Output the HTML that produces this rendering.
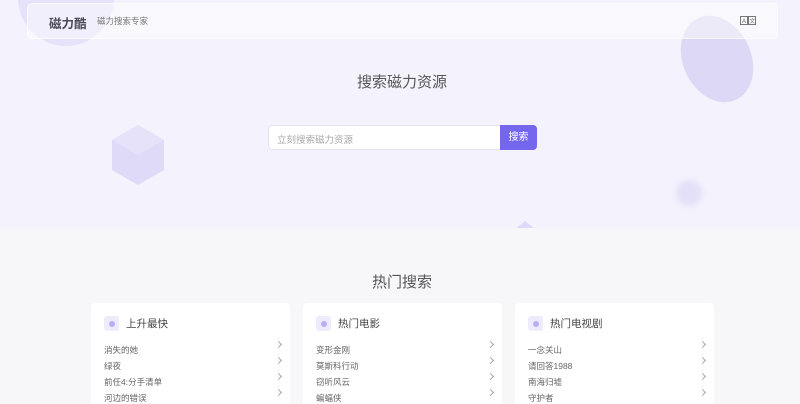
<!DOCTYPE html>
<html><head><meta charset="utf-8"><style>
*{margin:0;padding:0;box-sizing:border-box}
html,body{width:800px;height:404px;overflow:hidden}
body{background:#f7f7fa;font-family:"Liberation Sans","Noto Sans CJK SC",sans-serif;position:relative}
.hero{position:absolute;left:0;top:0;width:800px;height:228px;background:#f4f2fc;overflow:hidden}
.abs{position:absolute}
.hdr{left:27px;top:3px;width:751px;height:36px;border-radius:5px;background:rgba(255,255,255,.45);border:1px solid rgba(255,255,255,.6)}
.logo{left:49px;top:13px;font-size:12.5px;font-weight:bold;color:#4a4a55}
.sub{left:97px;top:15px;font-size:8.5px;color:#777}
.h1{left:0;width:804px;text-align:center;font-size:15px;color:#555}
.inp{left:268px;top:125px;width:233px;height:25px;background:#fff;border:1px solid #e4e2ee;border-radius:4px 0 0 4px;font-size:9.5px;color:#aaa;padding:6px 8px}
.btn{left:500px;top:125px;width:37px;height:25px;background:#7566ee;border-radius:0 4px 4px 0;color:#fff;font-size:10px;text-align:center;line-height:25px}
.card{top:303px;width:199px;height:110px;background:#fff;border-radius:4px}
.ic{position:absolute;left:13px;top:13px;width:15px;height:15px;background:#eeebfc;border-radius:3px}
.ic:after{content:"";position:absolute;left:4.5px;top:4.5px;width:6px;height:6px;border-radius:50%;background:#b7aef5}
.ct{position:absolute;left:35px;top:13px;font-size:10.5px;color:#444}
.it{position:absolute;left:13px;font-size:8.5px;color:#666;width:175px}
.it i{position:absolute;right:-2px;top:-2px;width:5px;height:5px;border-right:1px solid #aaa;border-top:1px solid #aaa;transform:rotate(45deg)}
</style></head><body>
<div class="hero">
  <div class="abs" style="left:18px;top:-50px;width:96px;height:96px;border-radius:50%;background:#e6e2fa"></div>
  <div class="abs" style="left:683px;top:14px;width:68px;height:90px;border-radius:50%;background:#dcd8f5;transform:rotate(-25deg)"></div>
  <div class="abs" style="left:676px;top:180px;width:26px;height:26px;border-radius:50%;background:#e3e0f8;filter:blur(3px)"></div>
  <svg class="abs" style="left:105px;top:122px" width="66" height="72"><polygon points="33,3 59,18 59,48 33,63 7,48 7,18" fill="#dedaf7"/><polygon points="33,3 59,18 33,33 7,18" fill="#e5e2fa"/></svg>
  <svg class="abs" style="left:513px;top:219px" width="24" height="12"><polygon points="12,2 22,10 2,10" fill="#dedaf7"/></svg>
  <div class="abs hdr"></div>
  <div class="abs logo">磁力酷</div>
  <div class="abs sub">磁力搜索专家</div>
  <svg class="abs" style="left:740px;top:16px" width="16" height="9"><rect x=".5" y=".5" width="7" height="8" fill="none" stroke="#777"/><rect x="8.5" y=".5" width="7" height="8" fill="none" stroke="#777"/><text x="2" y="7" font-size="6" fill="#666" font-family="Liberation Sans">A</text><text x="9.5" y="7" font-size="5.5" fill="#666" font-family="Noto Sans CJK SC">文</text></svg>
  <div class="abs h1" style="top:71px">搜索磁力资源</div>
  <div class="abs inp">立刻搜索磁力资源</div>
  <div class="abs btn">搜索</div>
</div>
<div class="abs h1" style="top:271px">热门搜索</div>
<div class="abs card" style="left:91px"><div class="ic"></div><div class="ct">上升最快</div>
<div class="it" style="top:41px">消失的她<i></i></div><div class="it" style="top:57px">绿夜<i></i></div><div class="it" style="top:73px">前任4:分手清单<i></i></div><div class="it" style="top:89px">河边的错误<i></i></div></div>
<div class="abs card" style="left:303px"><div class="ic"></div><div class="ct">热门电影</div>
<div class="it" style="top:41px">变形金刚<i></i></div><div class="it" style="top:57px">莫斯科行动<i></i></div><div class="it" style="top:73px">窃听风云<i></i></div><div class="it" style="top:89px">蝙蝠侠<i></i></div></div>
<div class="abs card" style="left:515px"><div class="ic"></div><div class="ct">热门电视剧</div>
<div class="it" style="top:41px">一念关山<i></i></div><div class="it" style="top:57px">请回答1988<i></i></div><div class="it" style="top:73px">南海归墟<i></i></div><div class="it" style="top:89px">守护者<i></i></div></div>
</body></html>
